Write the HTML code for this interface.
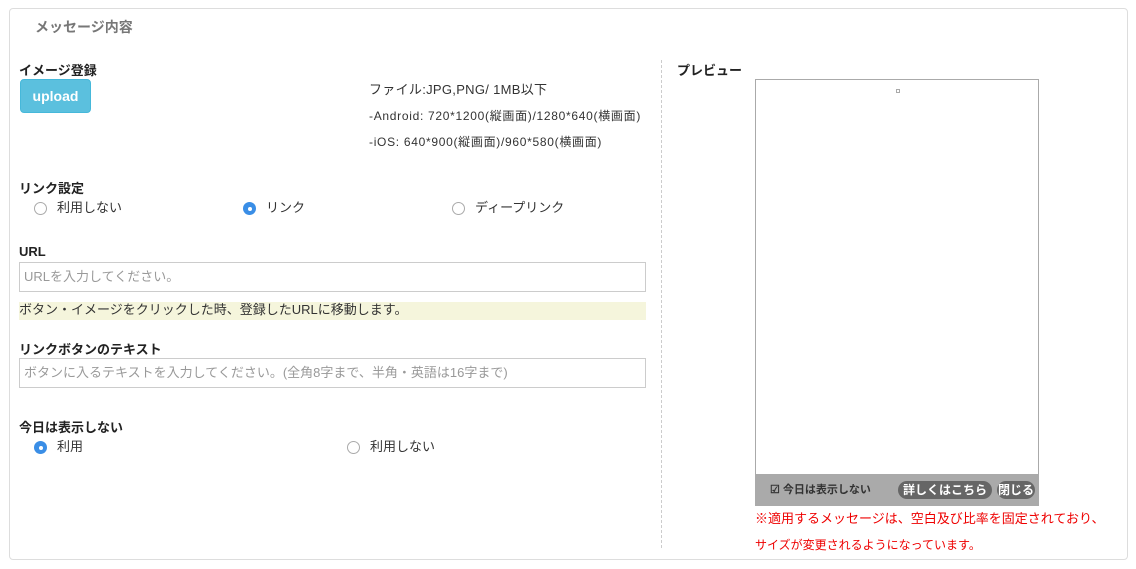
<!DOCTYPE html>
<html><head><meta charset="utf-8"><style>
*{margin:0;padding:0;box-sizing:border-box}
body{width:1136px;height:569px;background:#fff;font-family:"Liberation Sans","Noto Sans CJK JP",sans-serif;color:#333;position:relative;overflow:hidden}
.a{position:absolute;white-space:nowrap}
.panel{position:absolute;left:9px;top:8px;width:1119px;height:552px;border:1px solid #ddd;border-radius:4px}
.b{font-weight:bold;font-size:13px;color:#222}
.t{font-size:13px;color:#333}
.s{font-size:12px;color:#333;letter-spacing:0.7px}
.r{position:absolute;width:13px;height:13px;border-radius:50%;border:1px solid #aaa;background:#fff}
.r.on{border:none;background:#3a8ee6}
.r.on::after{content:"";position:absolute;left:4.5px;top:4.5px;width:4px;height:4px;border-radius:50%;background:#fff}
.in{position:absolute;left:19px;width:627px;height:30px;border:1px solid #ccc;font-size:13px;color:#999;padding:6px 4px;line-height:16px}
</style></head><body>
<div class="panel"></div>
<div class="a" style="left:35px;top:17px;font-size:14px;font-weight:bold;color:#777">メッセージ内容</div>
<div class="a b" style="left:19px;top:60px">イメージ登録</div>
<div class="a" style="left:20px;top:79px;width:71px;height:34px;background:#5bc0de;border:1px solid #46b8da;border-radius:4px;color:#fff;font-size:14px;text-align:center;line-height:32px;font-weight:bold">upload</div>
<div class="a t" style="left:369px;top:79px;letter-spacing:0.3px">ファイル:JPG,PNG/ 1MB以下</div>
<div class="a s" style="left:369px;top:107px">-Android: 720*1200(縦画面)/1280*640(横画面)</div>
<div class="a s" style="left:369px;top:133px">-iOS: 640*900(縦画面)/960*580(横画面)</div>
<div class="a b" style="left:19px;top:178px">リンク設定</div>
<div class="r" style="left:34px;top:202px"></div><div class="a t" style="left:57px;top:197px">利用しない</div>
<div class="r on" style="left:243px;top:202px"></div><div class="a t" style="left:266px;top:197px">リンク</div>
<div class="r" style="left:452px;top:202px"></div><div class="a t" style="left:475px;top:197px">ディープリンク</div>
<div class="a b" style="left:19px;top:244px">URL</div>
<div class="in" style="top:262px">URLを入力してください。</div>
<div class="a t" style="left:19px;top:302px;width:627px;height:18px;background:#f5f5dc;line-height:16px">ボタン・イメージをクリックした時、登録したURLに移動します。</div>
<div class="a b" style="left:19px;top:339px">リンクボタンのテキスト</div>
<div class="in" style="top:358px">ボタンに入るテキストを入力してください。(全角8字まで、半角・英語は16字まで)</div>
<div class="a b" style="left:19px;top:417px">今日は表示しない</div>
<div class="r on" style="left:34px;top:441px"></div><div class="a t" style="left:57px;top:436px">利用</div>
<div class="r" style="left:347px;top:441px"></div><div class="a t" style="left:370px;top:436px">利用しない</div>
<div class="a" style="left:661px;top:60px;height:488px;border-left:1px dashed #ccc"></div>
<div class="a b" style="left:677px;top:60px">プレビュー</div>
<div class="a" style="left:755px;top:79px;width:284px;height:427px;border:1px solid #aaa;background:#fff"></div>
<div class="a" style="left:896px;top:89px;width:4px;height:4px;border:1px solid #aaa"></div>
<div class="a" style="left:755px;top:474px;width:284px;height:32px;background:#aaa"></div>
<div class="a" style="left:770px;top:481px;font-size:11px;font-weight:bold;color:#333">☑ 今日は表示しない</div>
<div class="a" style="left:898px;top:481px;width:94px;height:18px;background:#666;border-radius:9px;color:#fff;font-size:12px;font-weight:bold;text-align:center;line-height:18px">詳しくはこちら</div>
<div class="a" style="left:997px;top:481px;width:38px;height:18px;background:#666;border-radius:9px;color:#fff;font-size:12px;font-weight:bold;text-align:center;line-height:18px">閉じる</div>
<div class="a" style="left:755px;top:508px;font-size:13px;color:#e00">※適用するメッセージは、空白及び比率を固定されており、</div>
<div class="a" style="left:755px;top:536px;font-size:12px;color:#e00">サイズが変更されるようになっています。</div>
</body></html>
